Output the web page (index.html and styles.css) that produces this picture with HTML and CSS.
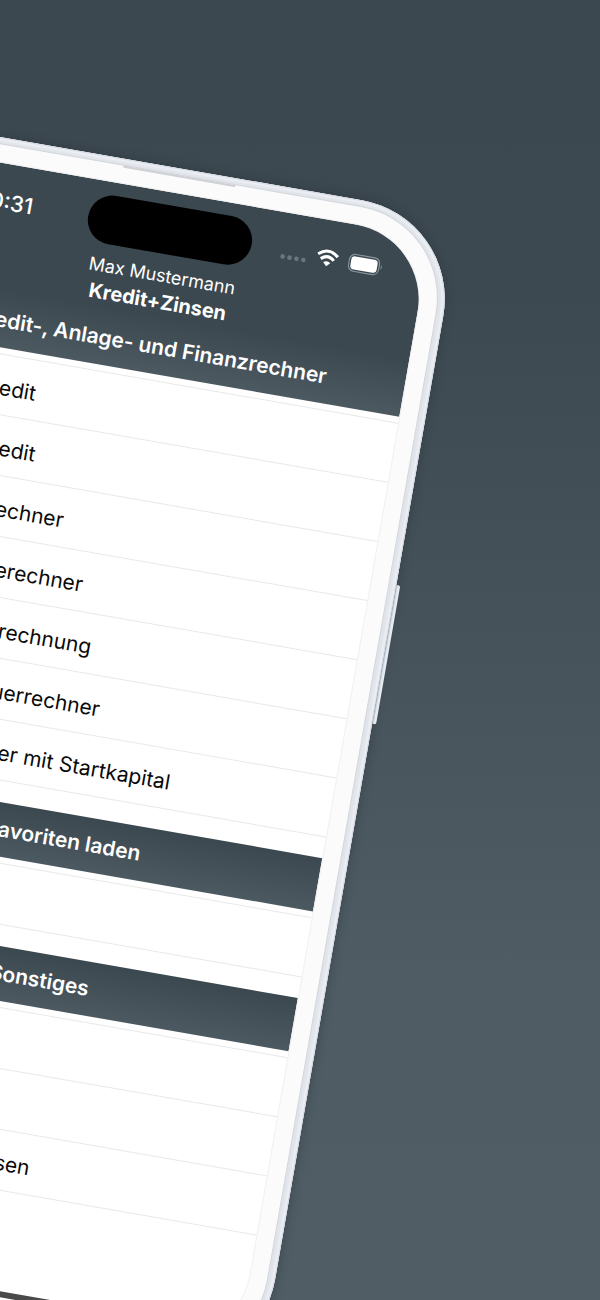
FILE: index.html
```html
<!DOCTYPE html>
<html lang="de">
<head>
<meta charset="utf-8">
<meta name="viewport" content="width=device-width, initial-scale=1">
<title>Kredit+Zinsen</title>
<link rel="stylesheet" href="styles.css">
</head>
<body>
<main class="stage">
  <div class="phone">
    <span class="speaker"></span>
    <span class="side-button"></span>
    <div class="bezel">
      <div class="screen">
        <header class="top">
          <div class="status">
            <time class="clock">10:31</time>
            <div class="island"></div>
            <div class="indicators">
              <svg width="26" height="20" viewBox="0 0 26 20" fill="#6a757c" aria-hidden="true"><circle cx="2.5" cy="16" r="2.3"/><circle cx="9.5" cy="16" r="2.3"/><circle cx="16.5" cy="16" r="2.3"/><circle cx="23.5" cy="16" r="2.3"/></svg>
              <svg width="22" height="18" viewBox="0 0 22 18" fill="none" stroke="#fff" stroke-width="3.1" aria-hidden="true"><path d="M1 6.3Q11-2.5 21 6.3"/><path d="M4.4 10.6Q11 4.7 17.6 10.6"/><path d="M11 17.2 7.4 13.6Q11 10.6 14.6 13.6Z" fill="#fff" stroke="none"/></svg>
              <svg width="35" height="20" viewBox="0 0 35 20" fill="none" aria-hidden="true"><rect x=".8" y="1.5" width="30.5" height="17" rx="5.6" stroke="#88929a" stroke-width="1.2"/><rect x="2.7" y="3.4" width="26.7" height="13.2" rx="3.8" fill="#fff"/><path d="M33 7.6q2.2 2.4 0 4.8Z" fill="#88929a"/></svg>
            </div>
          </div>
          <div class="heading">
            <p class="owner">Max Mustermann</p>
            <h1 class="app-name">Kredit+Zinsen</h1>
          </div>
          <h2 class="title">Kredit-, Anlage- und Finanzrechner</h2>
        </header>
        <ul class="list">
          <li class="row"><a class="label end-1" href="#">Ratenkredit</a></li>
          <li class="row"><a class="label end-2" href="#">Sofortkredit</a></li>
          <li class="row"><a class="label end-3" href="#">Zinsrechner</a></li>
          <li class="row"><a class="label end-4" href="#">Anlagerechner</a></li>
          <li class="row"><a class="label end-5" href="#">Rentenberechnung</a></li>
          <li class="row"><a class="label end-6" href="#">Steuerrechner</a></li>
          <li class="row"><a class="label end-7" href="#">Sparrechner mit Startkapital</a></li>
        </ul>
        <h2 class="title band">Favoriten laden</h2>
        <ul class="list">
          <li class="row"></li>
        </ul>
        <h2 class="title band">Sonstiges</h2>
        <ul class="list">
          <li class="row"></li>
          <li class="row"></li>
          <li class="row"><a class="label end-8" href="#">Kredit+Zinsen</a></li>
        </ul>
        <div class="home"></div>
      </div>
    </div>
  </div>
</main>
</body>
</html>
```
FILE: styles.css
```css
* { box-sizing: border-box; }

body {
  margin: 0;
  font-family: Inter, "Liberation Sans", sans-serif;
}

.stage {
  height: 100vh;
  overflow: hidden;
  display: flow-root;
  background: linear-gradient(#3c484f 0%, #3d4950 22%, #4f5c64 75%, #505d65 100%);
}

/* Device: tilted around the stage's top left corner */
.phone {
  position: relative;
  width: calc(100% - 32px);
  margin: 135px 0 0 -77px;
  padding: 6px 7px;
  border-radius: 100px;
  background: #dfe3ea;
  box-shadow:
    inset 0 0 1px 1px #d3d8e0,
    inset 0 0 3px 3px #f1f3f8,
    0 0 10px 1px rgba(28, 38, 46, 0.35);
  transform: rotate(9.9deg);
  transform-origin: 77px -135px;
}

.bezel {
  padding: 18px;
  border: 1px solid #d3d6da;
  border-radius: 93px;
  background: #fbfbfc;
}

.speaker {
  position: absolute;
  top: 7px;
  left: 50%;
  width: 114px;
  height: 2px;
  margin-left: -57px;
  border-radius: 2px;
  background: #cfd0d3;
}

.side-button {
  position: absolute;
  top: 373px;
  right: -4px;
  width: 4px;
  height: 141px;
  border-radius: 0 2px 2px 0;
  background: linear-gradient(90deg, #a9b2bb, #e6ebf2 50%);
}

.screen {
  display: flex;
  flex-direction: column;
  overflow: hidden;
  border-radius: 76px;
  background: #fff;
  box-shadow: 0 0 0 1px #f0f0f1;
}

.top {
  padding-top: 13px;
  color: #fff;
  background: linear-gradient(#3c484f 68%, #4c5961);
}

.status {
  display: grid;
  grid-template-columns: 1fr 166px 1fr;
  align-items: center;
}

.clock {
  padding-right: 56px;
  text-align: right;
  font-size: 22px;
  font-weight: 500;
}

.island {
  height: 49px;
  border-radius: 25px;
  background: #000;
}

.indicators {
  display: flex;
  justify-content: flex-end;
  align-items: center;
  gap: 10px;
  padding-right: 42px;
}

.heading {
  padding: 9px 0 5px;
  text-align: center;
  line-height: 26px;
}

.owner {
  margin: 0;
  font-size: 18px;
  font-weight: 400;
}

.app-name {
  margin: 0;
  font-size: 20px;
  font-weight: 700;
}

.title {
  margin: 0;
  font-size: 21px;
  font-weight: 600;
  line-height: 54px;
  text-align: center;
  white-space: nowrap;
  color: #fff;
}

.band {
  background: linear-gradient(#3c484f, #4c5961);
}

.list {
  margin: 6px 0 21px;
  padding: 0;
  border-top: 1px solid #e8e8e9;
  list-style: none;
}

.row {
  display: flex;
  height: 60px;
  padding-top: 5px;
  border-bottom: 1px solid #e8e8e9;
}

.label {
  display: flex;
  justify-content: flex-end;
  align-items: center;
  white-space: nowrap;
  font-size: 21px;
  color: #0a0a0a;
  text-decoration: none;
}

.end-1 { width: 154px; }
.end-2 { width: 164px; }
.end-3 { width: 203px; }
.end-4 { width: 233px; }
.end-5 { width: 252px; }
.end-6 { width: 271px; }
.end-7 { width: 353px; }
.end-8 { width: 281px; }

.home {
  width: 184px;
  height: 6px;
  margin: 78px auto 10px;
  border-radius: 3px;
  background: #4a4a4a;
}
```
